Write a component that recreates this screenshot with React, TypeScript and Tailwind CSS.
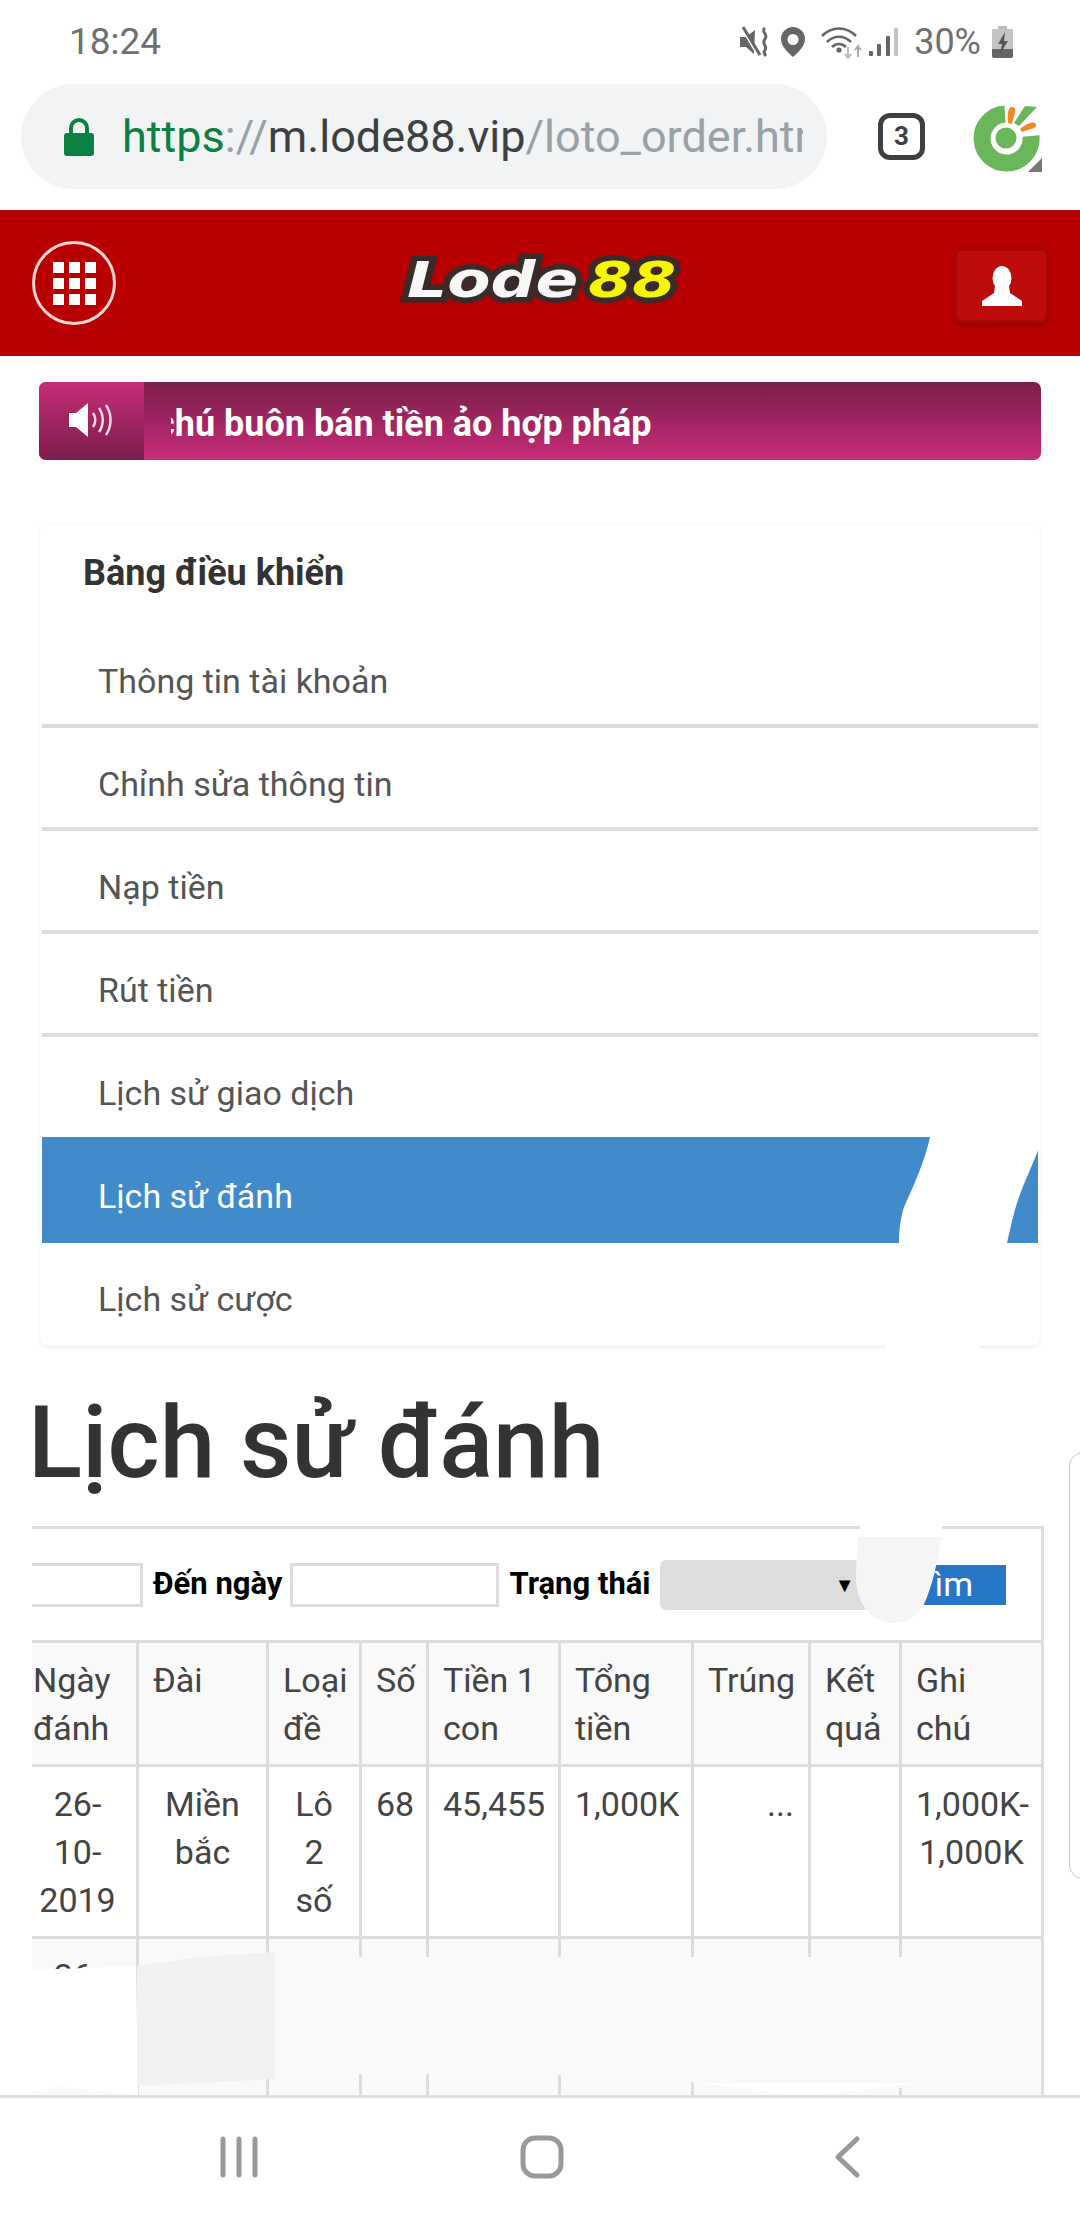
const MENU = [
  { label: "Thông tin tài khoản", h: "h-[103px]", cls: "border-b-4 border-[#ddd] text-[#555]", pt: "pt-[32px]" },
  { label: "Chỉnh sửa thông tin", h: "h-[103px]", cls: "border-b-4 border-[#ddd] text-[#555]", pt: "pt-[32px]" },
  { label: "Nạp tiền", h: "h-[103px]", cls: "border-b-4 border-[#ddd] text-[#555]", pt: "pt-[32px]" },
  { label: "Rút tiền", h: "h-[103px]", cls: "border-b-4 border-[#ddd] text-[#555]", pt: "pt-[32px]" },
  { label: "Lịch sử giao dịch", h: "h-[100px]", cls: "text-[#555]", pt: "pt-[32px]" },
  { label: "Lịch sử đánh", h: "h-[106px]", cls: "bg-[#428bca] text-white", pt: "pt-[35px]" },
  { label: "Lịch sử cược", h: "h-[102px]", cls: "text-[#555]", pt: "pt-[32px]" },
];

const HEADERS = ["Ngày đánh", "Đài", "Loại đề", "Số", "Tiền 1 con", "Tổng tiền", "Trúng", "Kết quả", "Ghi chú"];
const COLS = [120, 130, 93, 67, 132, 133, 117, 91, 142];
const CELL = "border-[3px] border-[#ddd] px-[14px] pt-[13px] align-top font-normal";

function StatusBar() {
  return (
    <div className="flex h-[84px] items-center pl-[69px] pr-[67px] text-[37px] text-[#6f6f6f]">
      <span>18:24</span>
      <div className="ml-auto flex items-center">
        <svg width="32" height="32" viewBox="0 0 32 32" className="fill-[#666]">
          <path d="M1 11h6l9 -7 -1 24 -8-7H1z" />
          <path d="M4 3l15 26" stroke="#fff" strokeWidth="3" />
          <path d="M4 1l17 28" stroke="#666" strokeWidth="3" />
          <path d="M26 2c-5 4 4 6 0 11s3 7 0 11c-2 3 0 5 1 6" fill="none" stroke="#666" strokeWidth="3" />
        </svg>
        <svg width="26" height="32" viewBox="0 0 26 32" className="ml-[9px]">
          <path fillRule="evenodd" fill="#666" d="M13 1a12 12 0 0 1 12 12c0 8-8 14-12 18C9 27 1 21 1 13A12 12 0 0 1 13 1zm0 7a5.5 5.5 0 1 0 0 11 5.5 5.5 0 0 0 0-11z" />
        </svg>
        <svg width="44" height="34" viewBox="0 0 44 34" fill="none" className="ml-[14px]">
          <path d="M2 11c10-10 24-10 34 0" stroke="#666" strokeWidth="2.6" />
          <path d="M7 17c7-7 17-7 24 0" stroke="#666" strokeWidth="2.6" />
          <path d="M12 22c4-4 10-4 14 0" stroke="#666" strokeWidth="2.6" />
          <circle cx="19" cy="25" r="2.6" fill="#666" />
          <path d="M28 22v11M25 29l3 4 3-4" stroke="#bbb" strokeWidth="2" />
          <path d="M38 32V21M35 25l3-4 3 4" stroke="#aaa" strokeWidth="2" />
        </svg>
        <svg width="30" height="30" viewBox="0 0 30 30" className="ml-[5px]">
          <rect x="0" y="24" width="4" height="5" rx="1" fill="#666" />
          <rect x="8" y="17" width="4" height="12" rx="1" fill="#666" />
          <rect x="17" y="9" width="4" height="20" rx="1" fill="#666" />
          <rect x="25" y="1" width="4" height="28" rx="1" fill="#c4c4c4" />
        </svg>
        <span className="ml-[15px] text-[36px]">30%</span>
        <svg width="21" height="32" viewBox="0 0 21 32" className="ml-[11px]">
          <rect x="6" y="0" width="9" height="4" fill="#bbb" />
          <rect x="0" y="3" width="21" height="20" fill="#c4c4c4" />
          <path d="M0 23h21v7a2 2 0 0 1-2 2H2a2 2 0 0 1-2-2z" fill="#666" />
          <path d="M13 6l-7 12h4l-2 10 8-13h-4z" fill="#555" />
        </svg>
      </div>
    </div>
  );
}

function CocCoc() {
  return (
    <svg width="70" height="70" viewBox="0 0 70 70" className="ml-[48px]">
      <path d="M32 11A24.5 24.5 0 1 0 58 33" fill="none" stroke="#6ab65a" strokeWidth="17" />
      <circle cx="33" cy="35" r="10.5" fill="#6ab65a" />
      <path d="M52 3l12 1-18 19-5-3z" fill="#6ab65a" />
      <path d="M38 4c3 0 5 1 4 5l-3 12-4-1c-1-6 0-16 3-16z" fill="#f08a24" />
      <path d="M62 20c2 2 1 4-1 5l-12 4-2-3c4-4 12-8 15-6z" fill="#f08a24" />
      <path d="M69 55v14H55z" fill="#777" />
    </svg>
  );
}

function UrlRow() {
  return (
    <div className="flex h-[126px] items-start pl-[21px]">
      <div className="flex h-[105px] w-[806px] items-center rounded-full bg-[#f1f3f4] pl-[43px]">
        <svg width="30" height="38" viewBox="0 0 30 38" className="shrink-0">
          <path d="M7 16V10a8 8 0 0 1 16 0v6" fill="none" stroke="#0b8043" strokeWidth="4" />
          <rect x="0" y="15" width="30" height="23" rx="3" fill="#0b8043" />
        </svg>
        <div className="ml-[28px] w-[681px] overflow-hidden whitespace-nowrap text-[45px] leading-[60px]">
          <span className="text-[#0b8043]">https</span>
          <span className="text-[#9aa0a6]">://</span>
          <span className="text-[#3c4043]">m.lode88.vip</span>
          <span className="text-[#9aa0a6]">/loto_order.html</span>
        </div>
      </div>
      <div className="ml-[51px] mt-[29px] flex h-[47px] w-[47px] items-center justify-center rounded-[12px] border-[5px] border-[#3c4043] text-[26px] font-bold text-[#3c4043]">
        3
      </div>
      <div className="mt-[19px]">
        <CocCoc />
      </div>
    </div>
  );
}

function Header() {
  return (
    <div className="flex h-[146px] items-start bg-gradient-to-b from-[#a80000] via-[#b80000] via-[6%] to-[#b80000] pl-[32px]">
      <div className="mt-[31px] flex h-[84px] w-[84px] items-center justify-center rounded-full border-[3px] border-[#f3d5d5]">
        <div className="grid grid-cols-3 gap-[5px]">
          {Array.from({ length: 9 }).map((_, i) => (
            <div key={i} className="h-[11px] w-[11px] bg-white" />
          ))}
        </div>
      </div>
      <div className="ml-[291px] mt-[41px] w-[240px] origin-left scale-x-[1.26] whitespace-nowrap font-['DejaVu_Sans',sans-serif] text-[50px] font-bold italic leading-[58px] [-webkit-text-stroke:11px_#3a2a2a] [paint-order:stroke_fill]">
        <span className="text-[#f7f7f7]">Lode</span>
        <span className="ml-[8px] text-[#f6f600]">88</span>
      </div>
      <div className="ml-auto mr-[31px] mt-[38px] flex h-[75px] w-[95px] items-center justify-center rounded-[8px] border-[3px] border-[#a60606] bg-[#bd0b0b] shadow-[0_3px_3px_rgba(120,0,0,0.5)]">
        <svg width="40" height="40" viewBox="0 0 40 40" className="fill-white">
          <ellipse cx="20" cy="12" rx="9.5" ry="12" />
          <path d="M13 20h14l1 7 12 8v5H0v-5l12-8z" />
        </svg>
      </div>
    </div>
  );
}

function Marquee() {
  return (
    <div className="mx-[39px] mt-[26px] flex h-[78px] overflow-hidden rounded-[7px] bg-gradient-to-b from-[#7a1e4b] to-[#c72c78]">
      <div className="flex w-[105px] items-start justify-center bg-gradient-to-b from-[#c72c78] to-[#7a1e4b] pt-[20px]">
        <svg width="46" height="36" viewBox="0 0 46 36" fill="none">
          <path d="M0 11h7L19 1v34L7 25H0z" fill="#fff" />
          <path d="M24 11c3 4 3 10 0 14" stroke="#f8d8e8" strokeWidth="2.5" />
          <path d="M30 6c5 7 5 17 0 24" stroke="#f8d8e8" strokeWidth="2.5" />
          <path d="M37 3c6 9 6 21 0 30" stroke="#f8d8e8" strokeWidth="2.5" />
        </svg>
      </div>
      <div className="ml-[27px] flex-1 overflow-hidden whitespace-nowrap text-[36px] font-bold leading-[84px] text-white">
        <span className="-ml-[15px] block">chú buôn bán tiền ảo hợp pháp</span>
      </div>
    </div>
  );
}

function Menu() {
  return (
    <div className="mx-[39px] mt-[63px] rounded-[8px] border border-[#f8f8f8] px-[2px] shadow-[0_2px_3px_rgba(0,0,0,0.06)]">
      <div className="h-[101px] pl-[41px] pt-[25px] text-[36px] font-bold leading-[48px] text-[#333]">Bảng điều khiển</div>
      {MENU.map((m) => (
        <div key={m.label} className={`${m.h} ${m.cls} ${m.pt} pl-[56px] text-[34px] leading-[48px]`}>
          {m.label}
        </div>
      ))}
    </div>
  );
}

function HistoryTable() {
  return (
    <div className="ml-[32px] mt-[18px] w-[1012px] overflow-hidden border-r-[3px] border-t-[3px] border-[#ddd]">
      <div className="flex h-[111px] items-center">
        <div className="-ml-[10px] h-[44px] w-[121px] border-[3px] border-[#ddd] bg-white" />
        <b className="ml-[10px] text-[31px] text-black">Đến ngày</b>
        <div className="ml-[8px] h-[44px] w-[209px] border-[3px] border-[#ddd] bg-white" />
        <b className="ml-[10px] text-[31px] text-black">Trạng thái</b>
        <div className="ml-[9px] flex h-[50px] w-[209px] items-center justify-end rounded-[6px] bg-[#ddd] pr-[14px] text-[20px] text-black">▼</div>
        <div className="flex h-[40px] w-[137px] items-center bg-[#2876c8] pl-[46px] text-[34px] text-white">Tìm</div>
      </div>
      <div className="-ml-[16px]">
        <table className="w-[1027px] table-fixed border-collapse text-[34px] leading-[48px] text-[#444]">
          <colgroup>
            {COLS.map((w, i) => (
              <col key={i} style={{ width: w }} />
            ))}
          </colgroup>
          <thead>
            <tr className="h-[124px] bg-[#f9f9f9] text-left">
              {HEADERS.map((h) => (
                <th key={h} className={CELL}>
                  {h}
                </th>
              ))}
            </tr>
          </thead>
          <tbody>
            <tr className="h-[172px] text-center">
              <td className={CELL}>26-10-2019</td>
              <td className={CELL}>Miền bắc</td>
              <td className={CELL}>Lô 2 số</td>
              <td className={CELL}>68</td>
              <td className={CELL}>45,455</td>
              <td className={CELL}>1,000K</td>
              <td className={`${CELL} text-right`}>...</td>
              <td className={CELL}></td>
              <td className={CELL}>1,000K-1,000K</td>
            </tr>
            <tr className="h-[160px] bg-[#f9f9f9] text-center">
              <td className={CELL}>26-</td>
              <td className={CELL}></td>
              <td className={CELL}></td>
              <td className={CELL}></td>
              <td className={CELL}></td>
              <td className={CELL}></td>
              <td className={CELL}></td>
              <td className={CELL}></td>
              <td className={CELL}></td>
            </tr>
          </tbody>
        </table>
      </div>
    </div>
  );
}

function NavBar() {
  return (
    <div className="flex h-[125px] shrink-0 items-start border-t-[3px] border-[#e0e0e0] bg-white pl-[220px] pt-[37px]">
      <svg width="38" height="44" viewBox="0 0 38 44" stroke="#999" strokeWidth="5" strokeLinecap="round">
        <path d="M3 4v36M19 4v36M35 4v36" />
      </svg>
      <svg width="44" height="44" viewBox="0 0 44 44" fill="none" className="ml-[262px]">
        <rect x="3" y="3" width="38" height="38" rx="12" stroke="#999" strokeWidth="5" />
      </svg>
      <svg width="26" height="44" viewBox="0 0 26 44" fill="none" className="ml-[270px]">
        <path d="M23 4L4 22l19 18" stroke="#999" strokeWidth="5" strokeLinecap="round" strokeLinejoin="round" />
      </svg>
    </div>
  );
}

export default function App() {
  return (
    <div className="relative flex h-[2220px] w-[1080px] flex-col overflow-hidden bg-white font-['Roboto',sans-serif]">
      <StatusBar />
      <UrlRow />
      <Header />
      <div className="min-h-0 flex-1 overflow-hidden">
        <Marquee />
        <Menu />
        <h1 className="ml-[28px] mt-[32px] text-[100px] font-medium leading-[130px] text-[#333]">Lịch sử đánh</h1>
        <HistoryTable />
      </div>
      <NavBar />

      {/* edge panel handle */}
      <div className="absolute left-[1069px] top-[1452px] h-[427px] w-[24px] rounded-l-[14px] border border-[#c8c8c8] bg-white" />

      {/* painted-over patches in the screenshot */}
      <svg className="pointer-events-none absolute left-0 top-0" width="1080" height="2220" viewBox="0 0 1080 2220">
        <path d="M930 1137C925 1160 915 1183 904 1207C900 1220 899 1232 899 1243L1007 1243C1011 1225 1014 1212 1018 1200C1025 1180 1034 1162 1040 1145L1040 1137Z" fill="#fff" />
        <rect x="885" y="1243" width="95" height="110" fill="#fff" />
        <rect x="860" y="1526" width="82" height="12" fill="#fff" />
        <path d="M858 1537L941 1537C938 1560 932 1590 922 1608C912 1624 890 1627 876 1618C860 1608 855 1590 856 1570Z" fill="#f5f5f5" />
        <polygon points="32,1970 136,1966 138,2095 110,2092 60,2087 32,2092" fill="#fff" />
        <polygon points="275,1957 1030,1957 1039,2000 1039,2060 1030,2088 800,2088 540,2074 275,2074" fill="#f9f9f9" />
        <polygon points="700,2083 920,2083 870,2089 815,2095 790,2095 750,2089" fill="#fff" />
        <polygon points="137,1966 200,1957 275,1952 275,2079 137,2086" fill="#f1f1f1" />
      </svg>
    </div>
  );
}
